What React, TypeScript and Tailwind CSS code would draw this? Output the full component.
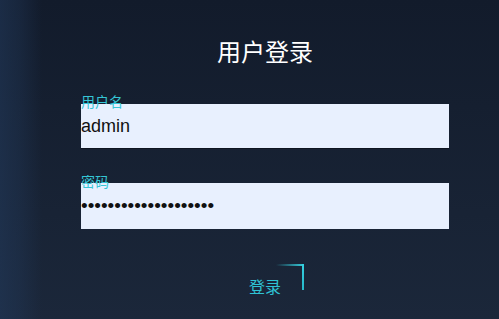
export default function App() {
  return (
    <div className="w-[499px] h-[319px] overflow-hidden bg-[linear-gradient(to_right,rgba(34,58,92,0.55),rgba(34,58,92,0.35)_20px,rgba(34,58,92,0)_42px),linear-gradient(to_bottom,#121b2b,#1b273a)] font-['Liberation_Sans','Noto_Sans_CJK_SC',sans-serif]">
      <div className="ml-[81px] w-[368px] pt-[41px] flex flex-col">
        <h1 className="text-center text-white text-[24px] leading-none">用户登录</h1>

        <label className="relative z-10 mt-[30px] text-[14px] leading-none text-[#35c6d6]">用户名</label>
        <input
          readOnly
          value="admin"
          className="-mt-[5px] h-[45px] w-full bg-[#e8f0fe] text-[18px] text-[#111] outline-none border-b border-[#0e1521]"
        />

        <label className="relative z-10 mt-[26px] text-[14px] leading-none text-[#35c6d6]">密码</label>
        <input
          readOnly
          type="password"
          value="12345678901234567890"
          className="-mt-[6px] h-[46px] w-full bg-[#e8f0fe] text-[19px] text-[#111] outline-none"
        />

        <div className="mt-[35px] flex justify-center">
          <button className="relative w-[77px] h-[42px] pt-[6px] text-[16px] leading-none text-[#2fc3d4]">
            登录
            <span className="absolute top-0 right-0 w-[28px] h-[2px] bg-gradient-to-r from-transparent to-[#35d0e0]" />
            <span className="absolute top-0 right-0 w-[2px] h-[26px] bg-gradient-to-b from-[#35d0e0] to-[#26b8ca]" />
          </button>
        </div>
      </div>
    </div>
  );
}
